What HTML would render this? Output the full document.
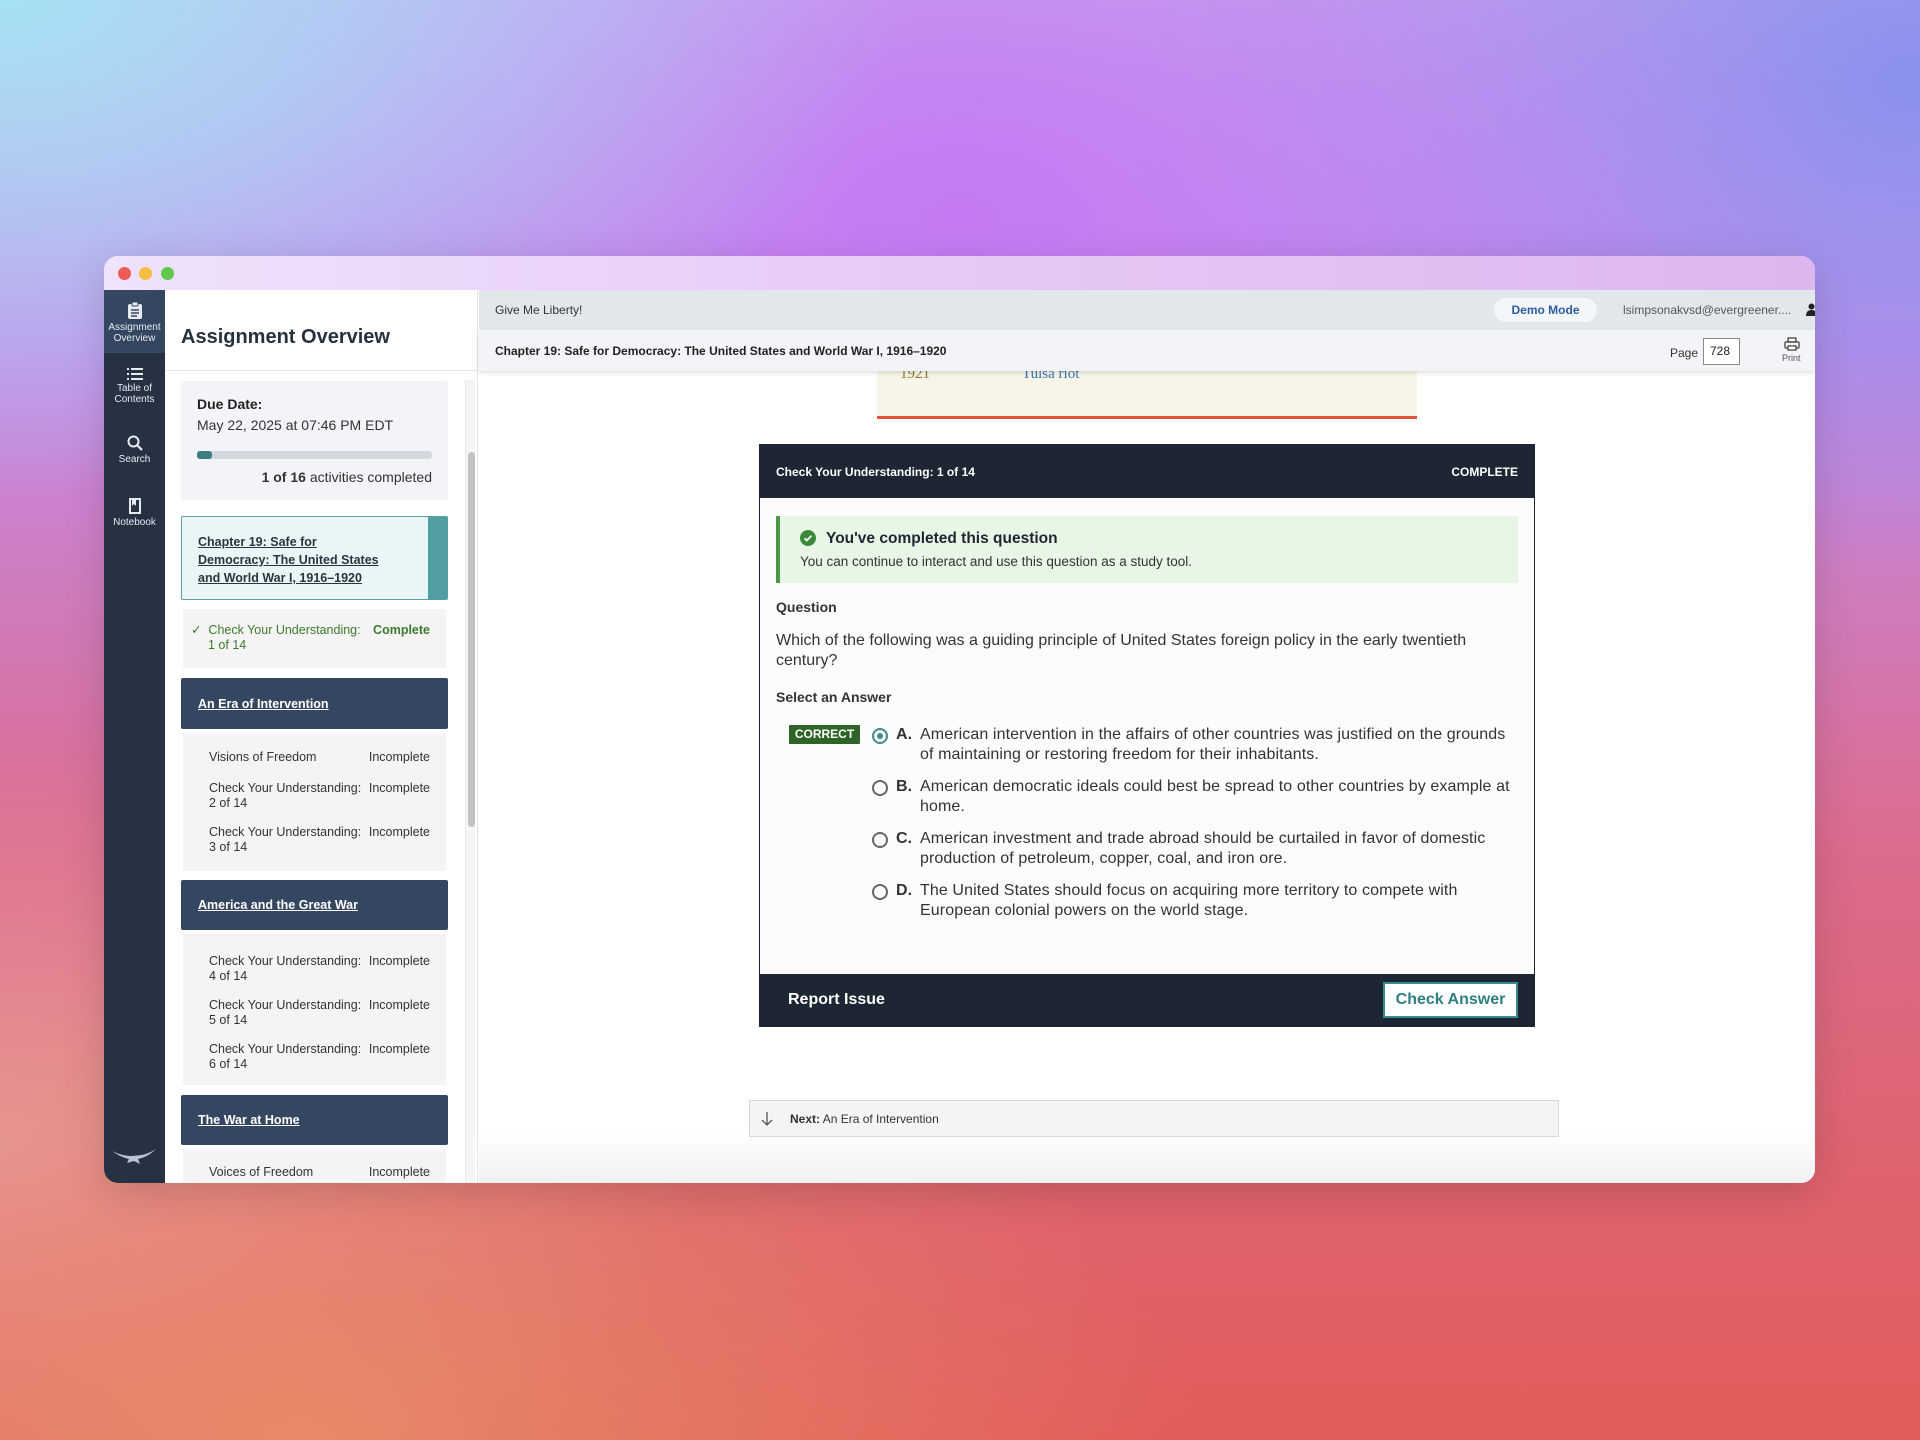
<!DOCTYPE html>
<html><head><meta charset="utf-8"><style>
*{box-sizing:border-box;margin:0;padding:0}
body{width:1920px;height:1440px;overflow:hidden;font-family:"Liberation Sans",sans-serif;position:relative;
background:
radial-gradient(ellipse 900px 500px at 0px 0px,#a6e0f4 0%,rgba(166,224,244,0) 100%),
radial-gradient(ellipse 900px 600px at 960px 220px,#c47af2 0%,rgba(196,122,242,0) 100%),
radial-gradient(ellipse 800px 500px at 1920px 80px,#8a90ec 0%,rgba(138,144,236,0) 100%),
radial-gradient(ellipse 900px 500px at 300px 1440px,#e8886a 0%,rgba(232,136,106,0) 100%),
radial-gradient(ellipse 700px 400px at 0px 1150px,#e59aa0 0%,rgba(229,154,160,0) 100%),
linear-gradient(180deg,#c9b0f0 0%,#c48ae8 25%,#dc6a8a 60%,#e05c58 100%);}
.a{position:absolute}
.win{left:104px;top:256px;width:1711px;height:927px;border-radius:14px;overflow:hidden;background:#fff;box-shadow:0 10px 40px rgba(0,0,0,.15)}
.tb{left:0;top:0;width:100%;height:34px;background:linear-gradient(90deg,#efe2fb,#e6c9f6 50%,#dcb6ef)}
.dot{top:11px;width:13px;height:13px;border-radius:50%}
.side{left:0;top:34px;width:61px;height:893px;background:#263142}
.si{width:61px;text-align:center;color:#e6ebf1;font-size:10px;line-height:11px}
.lp{left:61px;top:34px;width:313px;height:893px;background:#fff;border-right:1px solid #e1e4e8}
.hdr{background:#354760;color:#fff;font-weight:bold;font-size:12.5px;text-decoration:underline;padding-left:17px;display:flex;align-items:center;border-radius:2px}
.items{background:#f4f4f4;font-size:12.5px;color:#333;padding:0 16px 0 26px}
.row{display:flex;justify-content:space-between;line-height:15px}
.main{left:375px;top:34px;width:1336px;height:893px;background:#fff}
.opt{position:relative;padding-left:48px;height:52px;white-space:nowrap}
</style></head><body>
<div class="a win">
 <div class="a tb"></div>
 <div class="a dot" style="left:14px;background:#ee5d55"></div>
 <div class="a dot" style="left:35px;background:#f4bd3f"></div>
 <div class="a dot" style="left:57px;background:#5fc84d"></div>
 <div class="a side">
  <div class="a" style="left:0;top:0;width:61px;height:63px;background:#354760"></div>
  <div class="a si" style="top:11px"><svg width="16" height="18" viewBox="0 0 16 18"><rect x="1" y="3" width="14" height="15" rx="2" fill="#e6ebf1"/><rect x="5" y="1" width="6" height="4" rx="1" fill="#e6ebf1" stroke="#354760"/><path d="M4 9h8M4 12h8M4 15h6" stroke="#354760" stroke-width="1.5"/></svg><br>Assignment<br>Overview</div>
  <div class="a si" style="top:78px"><svg width="16" height="12" viewBox="0 0 16 12"><path d="M0 1h2M4 1h12M0 6h2M4 6h12M0 11h2M4 11h12" stroke="#e6ebf1" stroke-width="2"/></svg><br>Table of<br>Contents</div>
  <div class="a si" style="top:145px"><svg width="16" height="16" viewBox="0 0 16 16"><circle cx="6.5" cy="6.5" r="5" fill="none" stroke="#e6ebf1" stroke-width="2"/><path d="M10 10l5 5" stroke="#e6ebf1" stroke-width="2.2"/></svg><br>Search</div>
  <div class="a si" style="top:208px"><svg width="12" height="16" viewBox="0 0 12 16"><rect x="1" y="1" width="10" height="14" fill="none" stroke="#e6ebf1" stroke-width="2"/><path d="M3 1v7l2-2 2 2V1z" fill="#e6ebf1"/></svg><br>Notebook</div>
  <svg class="a" style="left:8px;top:858px" width="44" height="18" viewBox="0 0 44 18"><path d="M0 3 Q10 8 20 8 L30 7 Q38 5 44 1 Q38 7 30 10 L26 11 L28 16 L22 13 L15 15 L17 11 Q8 9 0 3Z" fill="#b8c4d2"/></svg>
 </div>
 <div class="a lp">
  <div class="a" style="left:16px;top:36px;font-size:20px;font-weight:bold;color:#26313f">Assignment Overview</div>
  <div class="a" style="left:0;top:80px;width:313px;height:1px;background:#e3e6ea"></div>
  <div class="a" style="left:300px;top:90px;width:10px;height:803px;background:#f5f5f5;border-left:1px solid #e8e8e8"></div>
  <div class="a" style="left:303px;top:162px;width:7px;height:375px;background:#c2c2c2;border-radius:4px"></div>
  <div class="a" style="left:16px;top:91px;width:267px;height:119px;background:#f3f4f7;border-radius:2px">
   <div class="a" style="left:16px;top:15px;font-size:14px;font-weight:bold;color:#222">Due Date:</div>
   <div class="a" style="left:16px;top:36px;font-size:14px;color:#333">May 22, 2025 at 07:46 PM EDT</div>
   <div class="a" style="left:16px;top:70px;width:235px;height:8px;background:#d2d8de;border-radius:3px"><div style="width:15px;height:8px;background:#3a7d82;border-radius:3px"></div></div>
   <div class="a" style="right:16px;top:88px;font-size:14px;color:#333"><b>1 of 16</b> activities completed</div>
  </div>
  <div class="a" style="left:16px;top:226px;width:267px;height:84px;background:#eaf6f6;border:1.5px solid #58a1a3;border-radius:2px">
   <div class="a" style="right:0;top:0;width:19px;height:100%;background:#519fa1"></div>
   <div class="a" style="left:16px;top:16px;width:188px;font-size:12.5px;line-height:18px;font-weight:bold;color:#2a3440;text-decoration:underline">Chapter 19: Safe for Democracy: The United States and World War I, 1916–1920</div>
  </div>
  <div class="a" style="left:18px;top:319px;width:263px;height:59px;background:#f4f4f4;padding:14px 16px 0 8px;color:#3d7a2c;font-size:12.5px">
   <div class="row" style="white-space:nowrap"><span>✓&nbsp; Check Your Understanding:</span><b>Complete</b></div><div style="padding-left:17px;line-height:15px">1 of 14</div>
  </div>
  <div class="a hdr" style="left:16px;top:388px;width:267px;height:51px">An Era of Intervention</div>
  <div class="a items" style="left:18px;top:443px;width:263px;height:138px;padding-top:17px">
   <div class="row"><span>Visions of Freedom</span><span>Incomplete</span></div>
   <div class="row" style="margin-top:16px"><span>Check Your Understanding:</span><span>Incomplete</span></div><div style="line-height:15px">2 of 14</div>
   <div class="row" style="margin-top:14px"><span>Check Your Understanding:</span><span>Incomplete</span></div><div style="line-height:15px">3 of 14</div>
  </div>
  <div class="a hdr" style="left:16px;top:590px;width:267px;height:50px">America and the Great War</div>
  <div class="a items" style="left:18px;top:644px;width:263px;height:151px;padding-top:20px">
   <div class="row"><span>Check Your Understanding:</span><span>Incomplete</span></div><div style="line-height:15px">4 of 14</div>
   <div class="row" style="margin-top:14px"><span>Check Your Understanding:</span><span>Incomplete</span></div><div style="line-height:15px">5 of 14</div>
   <div class="row" style="margin-top:14px"><span>Check Your Understanding:</span><span>Incomplete</span></div><div style="line-height:15px">6 of 14</div>
  </div>
  <div class="a hdr" style="left:16px;top:805px;width:267px;height:50px">The War at Home</div>
  <div class="a items" style="left:18px;top:859px;width:263px;height:40px;padding-top:16px">
   <div class="row"><span>Voices of Freedom</span><span>Incomplete</span></div>
  </div>
 </div>
 <div class="a main">
  <div class="a" style="left:398px;top:0;width:540px;height:129px;background:#f7f4e8;border-bottom:3px solid #e0553a"></div>
  <div class="a" style="left:421px;top:76px;font-family:'Liberation Serif',serif;font-size:15px;color:#8a7a30">1921</div>
  <div class="a" style="left:543px;top:76px;font-family:'Liberation Serif',serif;font-size:15px;color:#3a74b8">Tulsa riot</div>
  <div class="a" style="left:0;top:0;width:1336px;height:40px;background:#e2e7ec"></div>
  <div class="a" style="left:16px;top:13px;font-size:12px;color:#333">Give Me Liberty!</div>
  <div class="a" style="left:1015px;top:8px;width:103px;height:24px;background:#f3f6fb;border-radius:12px;text-align:center;line-height:24px;font-size:12px;font-weight:bold;color:#2c5d9e">Demo Mode</div>
  <div class="a" style="left:1144px;top:13px;font-size:12px;color:#555">lsimpsonakvsd@evergreener....</div>
  <svg class="a" style="left:1327px;top:13px" width="11" height="13" viewBox="0 0 11 13"><circle cx="5.5" cy="3.5" r="3" fill="#222"/><path d="M0 13q0-6 5.5-6t5.5 6z" fill="#222"/></svg>
  <div class="a" style="left:0;top:40px;width:1336px;height:41px;background:#f3f4f7;box-shadow:0 2px 4px rgba(0,0,0,.12)"></div>
  <div class="a" style="left:16px;top:54px;font-size:12px;font-weight:bold;color:#222">Chapter 19: Safe for Democracy: The United States and World War I, 1916–1920</div>
  <div class="a" style="left:1191px;top:56px;font-size:12px;color:#333">Page</div>
  <div class="a" style="left:1224px;top:48px;width:37px;height:27px;border:1px solid #888;background:#fff;font-size:12px;line-height:25px;padding-left:6px;color:#222">728</div>
  <svg class="a" style="left:1305px;top:47px" width="16" height="14" viewBox="0 0 16 14"><rect x="4" y="1" width="8" height="4" fill="none" stroke="#444" stroke-width="1.3"/><rect x="1" y="5" width="14" height="6" rx="1" fill="none" stroke="#444" stroke-width="1.3"/><rect x="4" y="9" width="8" height="4" fill="#fff" stroke="#444" stroke-width="1.3"/></svg>
  <div class="a" style="left:1303px;top:63px;font-size:9px;color:#555">Print</div>

  <div class="a" style="left:280px;top:154px;width:776px;height:583px;border:1.5px solid #1e2633;background:#fcfcfc">
   <div class="a" style="left:0;top:0;width:100%;height:53px;background:#1e2633"></div>
   <div class="a" style="left:16px;top:20px;font-size:12px;font-weight:bold;color:#fff">Check Your Understanding: 1 of 14</div>
   <div class="a" style="right:16px;top:20px;font-size:12px;font-weight:bold;color:#fff">COMPLETE</div>
   <div class="a" style="left:16px;top:71px;width:742px;height:67px;background:#e8f6e6;border-left:4px solid #4a9a45">
    <svg class="a" style="left:20px;top:14px" width="16" height="16" viewBox="0 0 16 16"><circle cx="8" cy="8" r="8" fill="#3a8a3a"/><path d="M4.5 8.2l2.3 2.3 4.6-4.8" stroke="#fff" stroke-width="1.8" fill="none"/></svg>
    <div class="a" style="left:46px;top:14px;font-size:15.5px;font-weight:bold;color:#1e2633">You've completed this question</div>
    <div class="a" style="left:20px;top:38px;font-size:13.5px;color:#333">You can continue to interact and use this question as a study tool.</div>
   </div>
   <div class="a" style="left:16px;top:154px;font-size:14px;font-weight:bold;color:#333">Question</div>
   <div class="a" style="left:16px;top:186px;width:730px;font-size:16px;line-height:20px;color:#333">Which of the following was a guiding principle of United States foreign policy in the early twentieth century?</div>
   <div class="a" style="left:16px;top:244px;font-size:14px;font-weight:bold;color:#333">Select an Answer</div>
   <div class="a" style="left:29px;top:280px;width:71px;height:19px;background:#2e6427;color:#fff;font-size:12px;font-weight:bold;text-align:center;line-height:19px;border-radius:1px">CORRECT</div>
   <div class="a" style="left:112px;top:280px;width:660px;font-size:16px;line-height:20px;color:#333;letter-spacing:0.1px">
    <div class="opt"><span class="a" style="left:0;top:3px;width:16px;height:16px;border:2px solid #3a8c8c;border-radius:50%;background:#fff"><span class="a" style="left:3px;top:3px;width:6px;height:6px;border-radius:50%;background:#3a8c8c"></span></span><b class="a" style="left:24px;top:0">A.</b>American intervention in the affairs of other countries was justified on the grounds<br>of maintaining or restoring freedom for their inhabitants.</div>
    <div class="opt"><span class="a" style="left:0;top:3px;width:16px;height:16px;border:2px solid #666;border-radius:50%"></span><b class="a" style="left:24px;top:0">B.</b>American democratic ideals could best be spread to other countries by example at<br>home.</div>
    <div class="opt"><span class="a" style="left:0;top:3px;width:16px;height:16px;border:2px solid #666;border-radius:50%"></span><b class="a" style="left:24px;top:0">C.</b>American investment and trade abroad should be curtailed in favor of domestic<br>production of petroleum, copper, coal, and iron ore.</div>
    <div class="opt"><span class="a" style="left:0;top:3px;width:16px;height:16px;border:2px solid #666;border-radius:50%"></span><b class="a" style="left:24px;top:0">D.</b>The United States should focus on acquiring more territory to compete with<br>European colonial powers on the world stage.</div>
   </div>
   <div class="a" style="left:0;bottom:0;width:100%;height:52px;background:#1e2633"></div>
   <div class="a" style="left:28px;bottom:17px;font-size:16px;font-weight:bold;color:#fff">Report Issue</div>
   <div class="a" style="right:16px;bottom:8px;width:135px;height:36px;background:#fff;border:2px solid #3a8c8c;color:#2f7f80;font-size:16px;font-weight:bold;text-align:center;line-height:32px">Check Answer</div>
  </div>

  <div class="a" style="left:270px;top:810px;width:810px;height:37px;background:#f4f4f4;border:1px solid #d8d8d8">
   <svg class="a" style="left:11px;top:11px" width="12" height="14" viewBox="0 0 12 14"><path d="M6 0v13M1 8l5 5 5-5" stroke="#555" stroke-width="1.3" fill="none"/></svg>
   <div class="a" style="left:40px;top:11px;font-size:12px;color:#333"><b>Next:</b> An Era of Intervention</div>
  </div>
  <div class="a" style="left:0;top:843px;width:1336px;height:50px;background:linear-gradient(180deg,rgba(255,255,255,0),#f0f0f0)"></div>
 </div>
</div>
</body></html>
